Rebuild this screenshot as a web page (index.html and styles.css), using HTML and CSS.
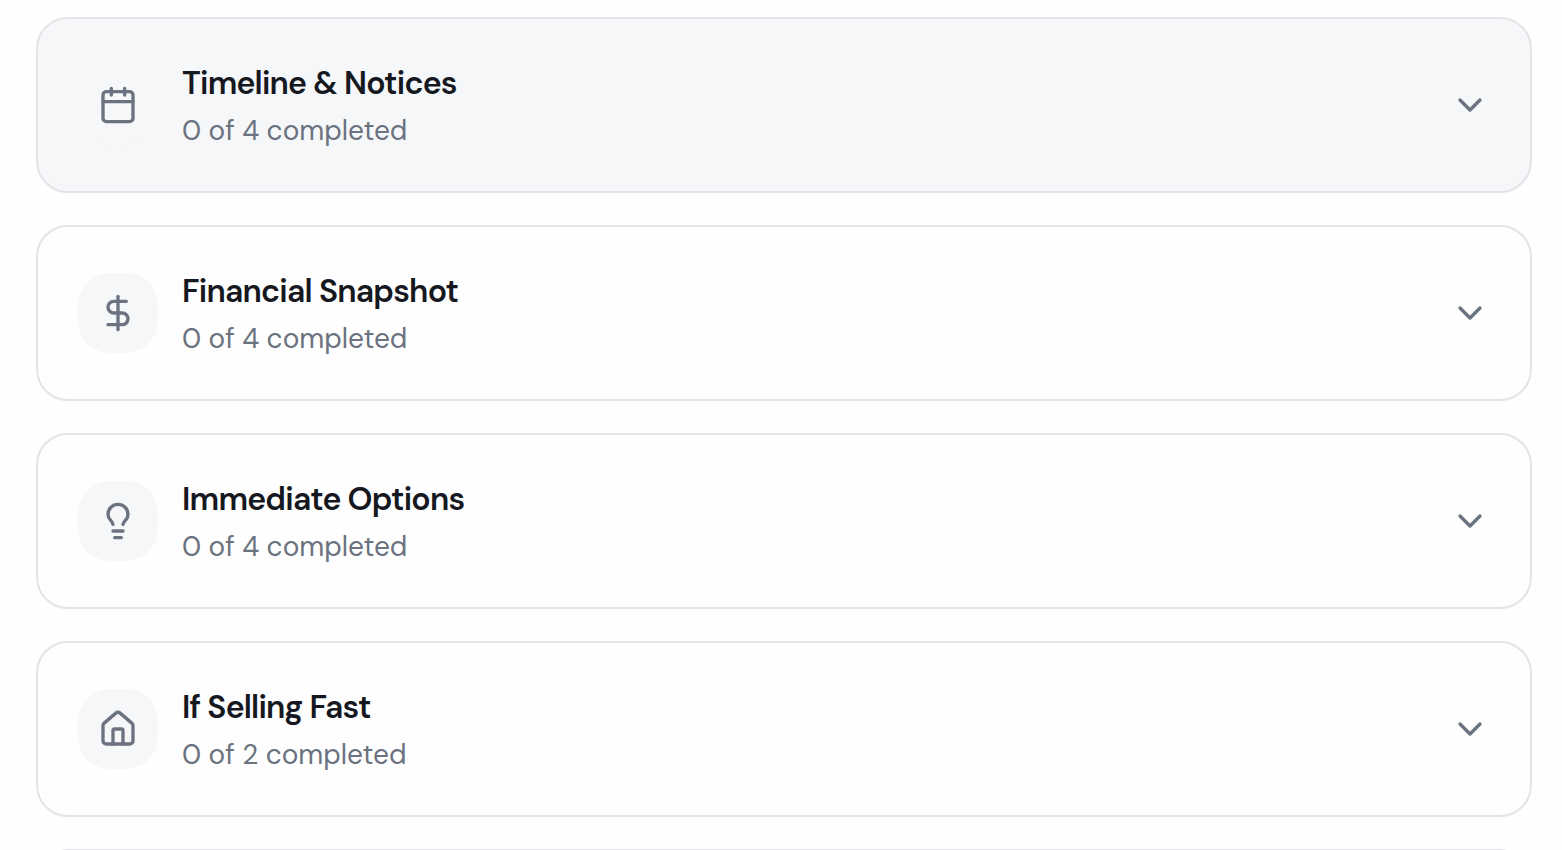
FILE: index.html
```html
<!DOCTYPE html>
<html lang="en">
<head>
  <meta charset="UTF-8">
  <meta name="viewport" content="width=device-width, initial-scale=1.0">
  <title>Checklist</title>
  <link rel="stylesheet" href="styles.css">
</head>
<body>
  <div class="checklist">
    <div class="card active">
      <div class="icon">
        <svg viewBox="0 0 24 24"><path d="M8 2v4M16 2v4"/><rect width="18" height="18" x="3" y="4" rx="2"/><path d="M3 10h18"/></svg>
      </div>
      <div class="info">
        <h3>Timeline &amp; Notices</h3>
        <p>0 of 4 completed</p>
      </div>
      <svg class="chevron" viewBox="0 0 24 24"><path d="m6 9 6 6 6-6"/></svg>
    </div>

    <div class="card">
      <div class="icon">
        <svg viewBox="0 0 24 24"><path d="M12 2v20"/><path d="M17 5H9.5a3.5 3.5 0 0 0 0 7h5a3.5 3.5 0 0 1 0 7H6"/></svg>
      </div>
      <div class="info">
        <h3>Financial Snapshot</h3>
        <p>0 of 4 completed</p>
      </div>
      <svg class="chevron" viewBox="0 0 24 24"><path d="m6 9 6 6 6-6"/></svg>
    </div>

    <div class="card">
      <div class="icon">
        <svg viewBox="0 0 24 24"><path d="M15 14c.2-1 .7-1.7 1.5-2.5 1-.9 1.5-2.2 1.5-3.5A6 6 0 0 0 6 8c0 1 .2 2.2 1.5 3.5.7.7 1.3 1.5 1.5 2.5"/><path d="M9 18h6M10 22h4"/></svg>
      </div>
      <div class="info">
        <h3>Immediate Options</h3>
        <p>0 of 4 completed</p>
      </div>
      <svg class="chevron" viewBox="0 0 24 24"><path d="m6 9 6 6 6-6"/></svg>
    </div>

    <div class="card">
      <div class="icon">
        <svg viewBox="0 0 24 24"><path d="M15 21v-8a1 1 0 0 0-1-1h-4a1 1 0 0 0-1 1v8"/><path d="M3 10a2 2 0 0 1 .709-1.528l7-5.999a2 2 0 0 1 2.582 0l7 5.999A2 2 0 0 1 21 10v9a2 2 0 0 1-2 2H5a2 2 0 0 1-2-2z"/></svg>
      </div>
      <div class="info">
        <h3>If Selling Fast</h3>
        <p>0 of 2 completed</p>
      </div>
      <svg class="chevron" viewBox="0 0 24 24"><path d="m6 9 6 6 6-6"/></svg>
    </div>

    <div class="card"></div>
  </div>
</body>
</html>
```
FILE: styles.css
```css
* {
  box-sizing: border-box;
}
body {
  margin: 0;
  background: #fefefe;
  font-family: "DM Sans", Inter, "Liberation Sans", sans-serif;
}
.checklist {
  display: flex;
  flex-direction: column;
  gap: 32px;
  height: 850px;
  padding: 17px 30px 0 36px;
  overflow: hidden;
}
.card {
  display: flex;
  align-items: center;
  flex-shrink: 0;
  gap: 24px;
  height: 176px;
  padding: 40px;
  border: 2px solid #e3e4e8;
  border-radius: 32px;
}
.card.active {
  background: #f5f7f9;
}
.icon {
  display: flex;
  align-items: center;
  justify-content: center;
  width: 80px;
  height: 80px;
  border-radius: 32px;
  background: #f5f7f9;
}
svg {
  width: 40px;
  height: 40px;
  fill: none;
  stroke: #6b7280;
  stroke-width: 2;
  stroke-linecap: round;
  stroke-linejoin: round;
}
.info {
  flex: 1;
}
h3 {
  margin: 0 0 4px;
  font-size: 32px;
  font-weight: 600;
  line-height: 48px;
  letter-spacing: -0.025em;
  color: #16181f;
}
p {
  margin: 0;
  font-size: 28px;
  line-height: 40px;
  color: #6b7280;
}
```
